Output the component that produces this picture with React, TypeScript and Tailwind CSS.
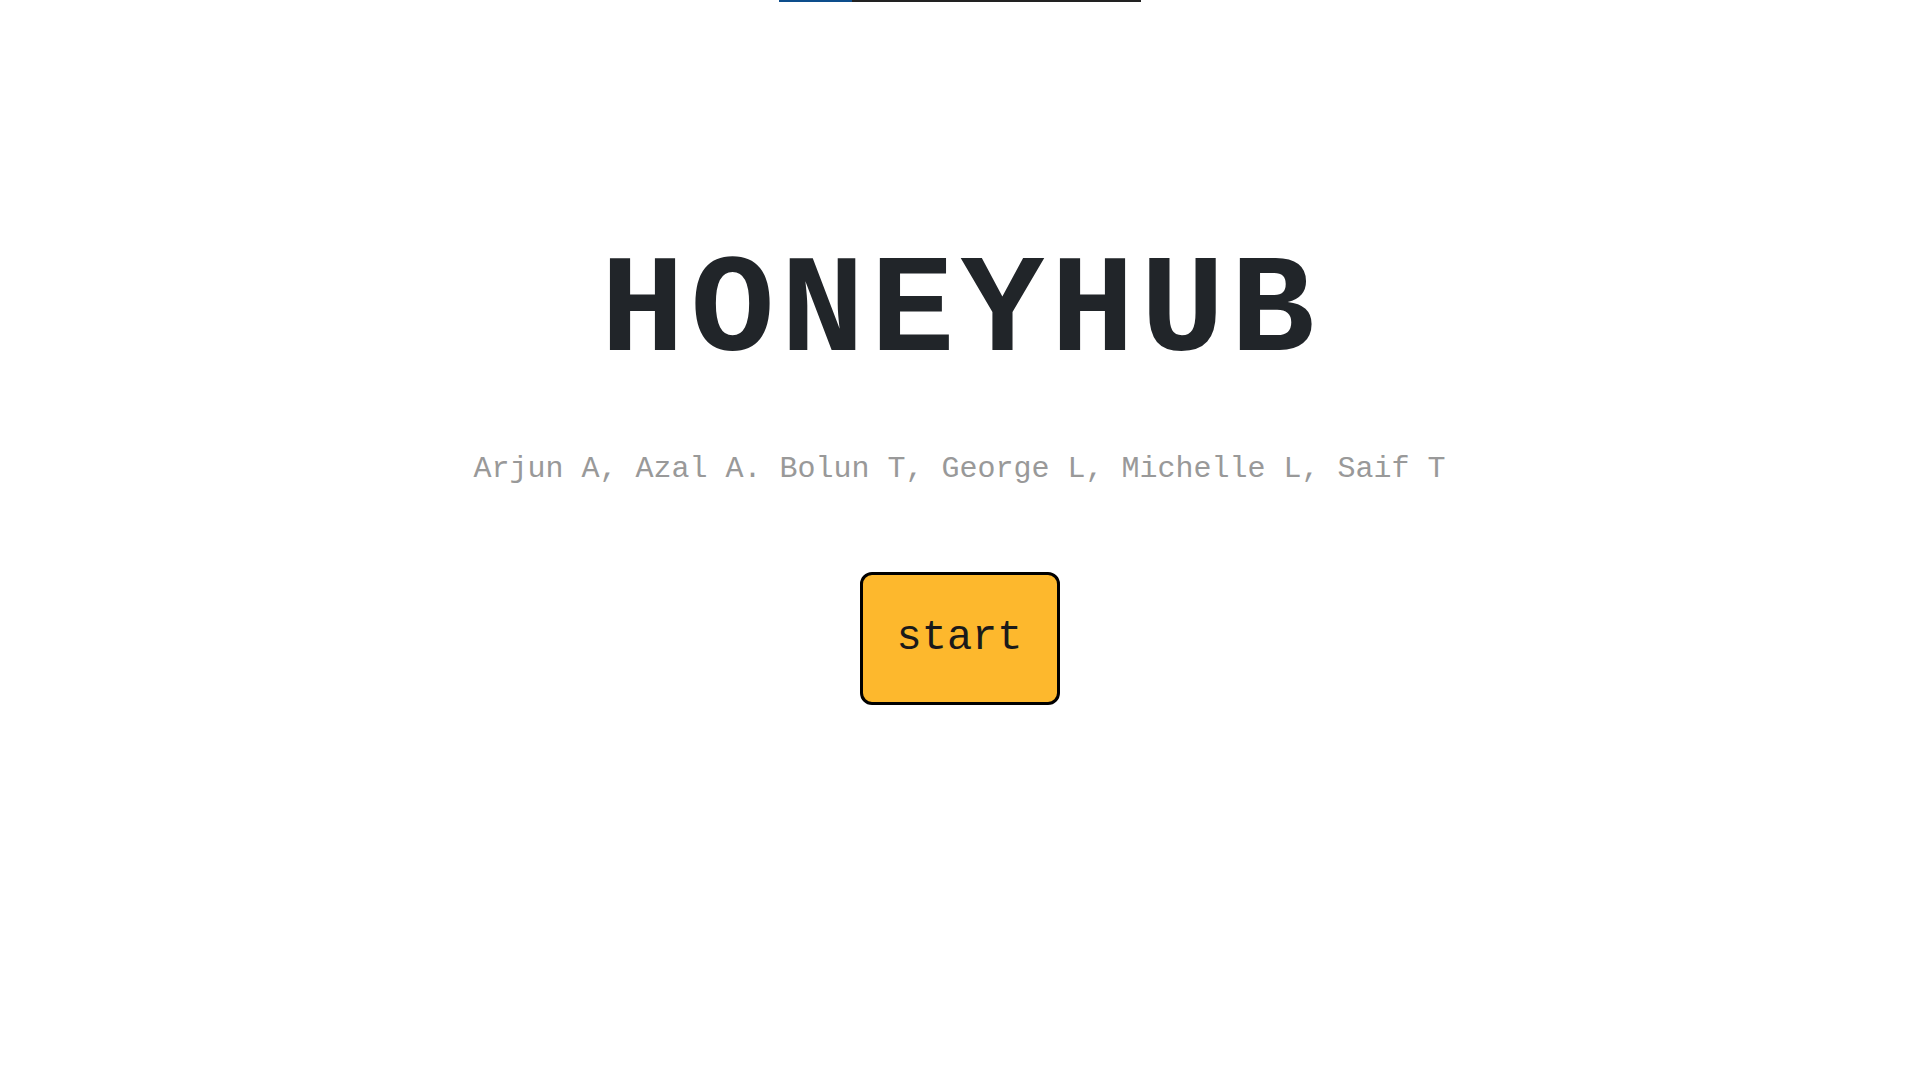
import React from "react";

export default function App() {
  return (
    <div className="min-h-screen w-full bg-white flex flex-col items-center font-['Courier_New','Liberation_Mono',monospace]">
      <div className="w-[362px] h-[2px] bg-[#222222] flex ml-[5px]">
        <div className="w-[73px] h-full bg-[#0d4d8c]" />
      </div>
      <h1 className="mt-[241px] ml-[6px] text-[140px] leading-none font-bold tracking-[6px] text-[#212529]">
        HONEYHUB
      </h1>
      <p className="mt-[71px] ml-[4px] text-[30px] leading-none text-[#999999]">
        Arjun A, Azal A. Bolun T, George L, Michelle L, Saif T
      </p>
      <button className="mt-[88px] ml-[4px] w-[200px] h-[133px] bg-[#fdb82d] border-[3px] border-black rounded-[12px] text-[42px] text-[#1a1a1a] flex items-center justify-center">
        start
      </button>
    </div>
  );
}
